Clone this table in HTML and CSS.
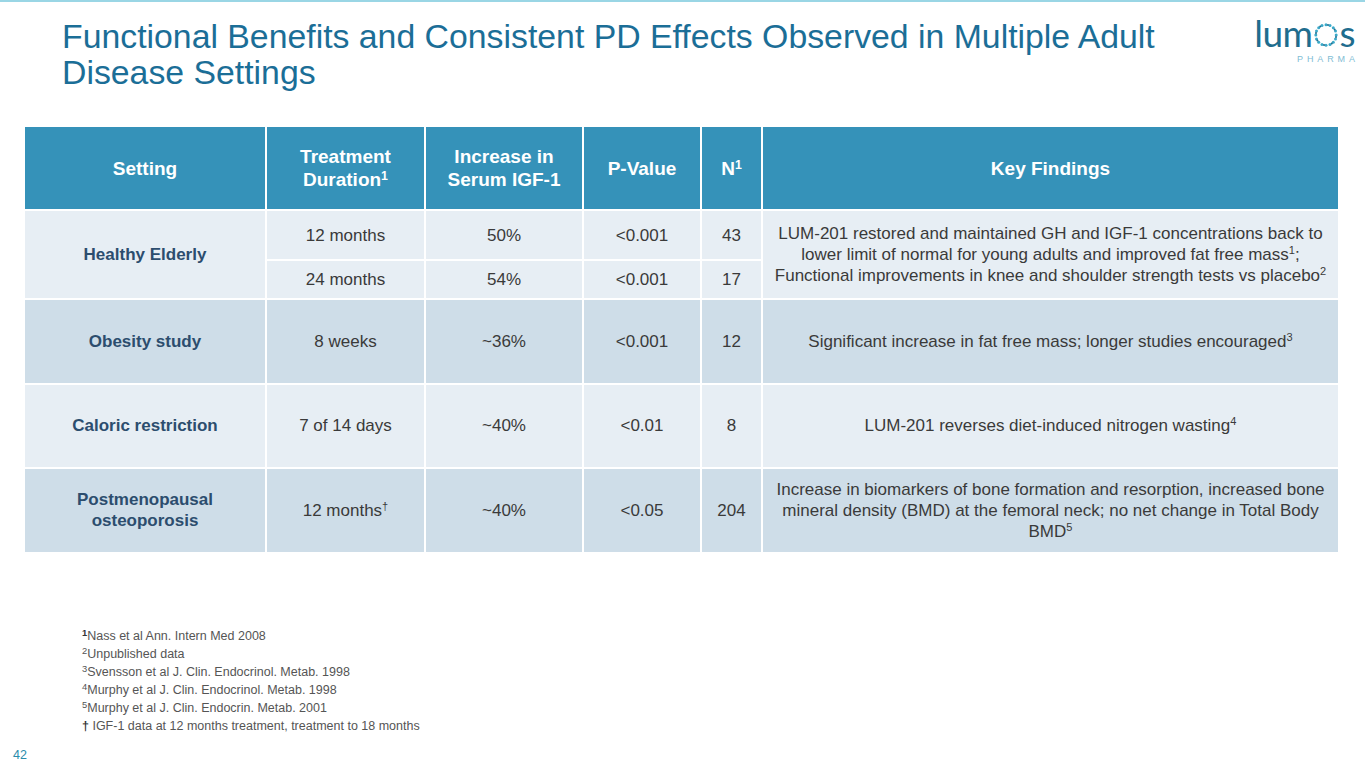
FILE: index.html
```html
<!DOCTYPE html>
<html lang="en">
<head>
<meta charset="utf-8">
<title>Functional Benefits</title>
<link rel="stylesheet" href="styles.css">
</head>
<body>
<div class="slide">
  <div class="topbar"></div>
  <header class="head">
    <h1 class="title">Functional Benefits and Consistent PD Effects Observed in Multiple Adult Disease Settings</h1>
    <div class="logo">
      <div class="logo-word"><span>lum</span><svg class="logo-o" width="24" height="24" viewBox="0 0 24 24" aria-hidden="true">
        <g fill="#3aa9c9">
          <circle cx="12" cy="1.8" r="1.5"/><circle cx="16" cy="2.6" r="1.5"/><circle cx="19.3" cy="4.8" r="1.5"/><circle cx="21.5" cy="8.1" r="1.5"/><circle cx="22.2" cy="12" r="1.5"/><circle cx="21.5" cy="15.9" r="1.5"/><circle cx="19.3" cy="19.2" r="1.5"/><circle cx="16" cy="21.4" r="1.5"/><circle cx="12" cy="22.2" r="1.5"/><circle cx="8" cy="21.4" r="1.5"/><circle cx="4.7" cy="19.2" r="1.5"/><circle cx="2.5" cy="15.9" r="1.5"/><circle cx="1.8" cy="12" r="1.5"/><circle cx="2.5" cy="8.1" r="1.5"/><circle cx="4.7" cy="4.8" r="1.5"/><circle cx="8" cy="2.6" r="1.5"/>
        </g>
        <g fill="#1f6d8e">
          <circle cx="14" cy="2.1" r="1"/><circle cx="20.6" cy="6.4" r="1"/><circle cx="22" cy="14" r="1"/><circle cx="17.8" cy="20.4" r="1"/><circle cx="10" cy="22" r="1"/><circle cx="3.4" cy="17.6" r="1"/><circle cx="2" cy="10" r="1"/><circle cx="6.2" cy="3.6" r="1"/>
        </g>
      </svg><span>s</span></div>
      <div class="logo-sub">PHARMA</div>
    </div>
  </header>

  <table class="data">
    <colgroup>
      <col class="c1"><col class="c2"><col class="c3"><col class="c4"><col class="c5"><col class="c6">
    </colgroup>
    <thead>
      <tr>
        <th>Setting</th>
        <th>Treatment<br>Duration<sup>1</sup></th>
        <th>Increase in<br>Serum IGF-1</th>
        <th>P-Value</th>
        <th>N<sup>1</sup></th>
        <th>Key Findings</th>
      </tr>
    </thead>
    <tbody>
      <tr class="light r-a">
        <td class="set" rowspan="2">Healthy Elderly</td>
        <td>12 months</td><td>50%</td><td>&lt;0.001</td><td>43</td>
        <td class="key" rowspan="2">LUM-201 restored and maintained GH and IGF-1 concentrations back to lower limit of normal for young adults and improved fat free mass<sup>1</sup>; Functional improvements in knee and shoulder strength tests vs placebo<sup>2</sup></td>
      </tr>
      <tr class="light r-b">
        <td>24 months</td><td>54%</td><td>&lt;0.001</td><td>17</td>
      </tr>
      <tr class="dark r-full">
        <td class="set">Obesity study</td>
        <td>8 weeks</td><td>~36%</td><td>&lt;0.001</td><td>12</td>
        <td class="key">Significant increase in fat free mass; longer studies encouraged<sup>3</sup></td>
      </tr>
      <tr class="light r-full">
        <td class="set">Caloric restriction</td>
        <td>7 of 14 days</td><td>~40%</td><td>&lt;0.01</td><td>8</td>
        <td class="key">LUM-201 reverses diet-induced nitrogen wasting<sup>4</sup></td>
      </tr>
      <tr class="dark r-full">
        <td class="set">Postmenopausal<br>osteoporosis</td>
        <td>12 months<sup>†</sup></td><td>~40%</td><td>&lt;0.05</td><td>204</td>
        <td class="key">Increase in biomarkers of bone formation and resorption, increased bone mineral density (BMD) at the femoral neck; no net change in Total Body BMD<sup>5</sup></td>
      </tr>
    </tbody>
  </table>

  <ul class="notes">
    <li><sup class="b">1</sup>Nass et al Ann. Intern Med 2008</li>
    <li><sup>2</sup>Unpublished data</li>
    <li><sup>3</sup>Svensson et al J. Clin. Endocrinol. Metab. 1998</li>
    <li><sup>4</sup>Murphy et al J. Clin. Endocrinol. Metab. 1998</li>
    <li><sup>5</sup>Murphy et al J. Clin. Endocrin. Metab. 2001</li>
    <li><b class="dag">†</b> IGF-1 data at 12 months treatment, treatment to 18 months</li>
  </ul>

  <div class="pagenum">42</div>
</div>
</body>
</html>
```

FILE: styles.css
```css
* { box-sizing: border-box; }
html, body { margin: 0; padding: 0; background: #ffffff; }
body { font-family: "Liberation Sans", Arial, sans-serif; }

.slide {
  position: relative;
  width: 1365px;
  height: 768px;
  overflow: hidden;
  background: #ffffff;
}

.topbar {
  height: 2px;
  background: #9ad6e5;
}

.head {
  display: flex;
  justify-content: space-between;
  align-items: flex-start;
  padding: 16px 10px 0 62px;
}

.title {
  margin: 0;
  width: 1130px;
  font-size: 33.8px;
  line-height: 36px;
  font-weight: normal;
  color: #1b6e97;
}

.logo {
  display: flex;
  flex-direction: column;
  align-items: flex-end;
  margin-top: -2px;
  width: 100px;
}
.logo-word {
  display: flex;
  align-items: flex-end;
  font-family: Lato, "Open Sans", sans-serif;
  font-weight: 400;
  font-size: 37px;
  line-height: 34px;
  letter-spacing: -0.5px;
  color: #1f6d8e;
  height: 34px;
}
.logo-o {
  margin: 0 1px 3px 2px;
}
.logo-sub {
  margin-top: 4px;
  font-family: "Liberation Sans", Arial, sans-serif;
  font-size: 9px;
  letter-spacing: 3.9px;
  margin-right: -3.9px;
  color: #7fbdd4;
}

.data {
  margin: 35px 0 0 23px;
  width: 1317px;
  border-collapse: separate;
  border-spacing: 2px;
  table-layout: fixed;
  font-size: 17px;
  color: #3a3a3a;
}
.c1 { width: 240px; }
.c2 { width: 157px; }
.c3 { width: 156px; }
.c4 { width: 116px; }
.c5 { width: 59px; }
.c6 { width: auto; }

.data th {
  height: 82px;
  background: #3592b9;
  color: #ffffff;
  font-size: 19px;
  font-weight: bold;
  line-height: 23px;
  text-align: center;
  vertical-align: middle;
  padding: 0 6px;
}
.data td {
  text-align: center;
  vertical-align: middle;
  padding: 0 8px;
  line-height: 21px;
}
.data sup {
  font-size: 0.65em;
  line-height: 0;
  vertical-align: 0.5em;
}
.light td { background: #e7eef4; }
.dark td { background: #cedde8; }
.r-a td { height: 48px; }
.r-b td { height: 37px; }
.r-full td { height: 82.5px; }

.data td.set {
  font-weight: bold;
  color: #2c4d6e;
}
.data td.key { padding: 0 4px; }

.notes {
  list-style: none;
  margin: 73px 0 0 82px;
  padding: 0;
  font-size: 12.5px;
  line-height: 18px;
  color: #555555;
}
.notes sup {
  font-size: 0.75em;
  line-height: 0;
  vertical-align: 0.45em;
}
.notes sup.b { font-weight: bold; color: #333; }
.dag { font-weight: bold; color: #333; }

.pagenum {
  position: absolute;
  left: 13px;
  top: 748px;
  font-size: 12.5px;
  color: #2a8cab;
}
```
